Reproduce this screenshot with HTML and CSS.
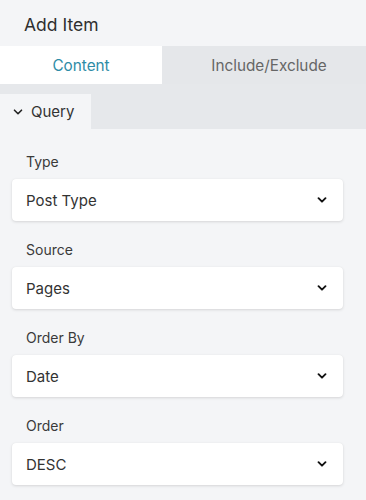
FILE: index.html
```html
<!DOCTYPE html>
<html>
<head>
<meta charset="utf-8">
<link rel="stylesheet" href="styles.css">
</head>
<body>
<div class="panel">
  <div class="title">Add Item</div>
  <div class="tabs">
    <div class="tab active">Content</div>
    <div class="tab">Include/Exclude</div>
  </div>
  <div class="section-bar">
    <div class="section-tab">
      <svg class="caret" width="10" height="10" viewBox="0 0 10 10"><path d="M1.5 3.2 L5 6.7 L8.5 3.2" fill="none" stroke="#222" stroke-width="1.6" stroke-linecap="round" stroke-linejoin="round"/></svg>
      <span>Query</span>
    </div>
  </div>
  <div class="fields">
    <div class="field">
      <div class="label">Type</div>
      <div class="select"><span>Post Type</span><svg class="chev" width="12" height="12" viewBox="0 0 12 12"><path d="M2.5 4.2 L6 7.7 L9.5 4.2" fill="none" stroke="#111" stroke-width="1.9" stroke-linecap="round" stroke-linejoin="round"/></svg></div>
    </div>
    <div class="field">
      <div class="label">Source</div>
      <div class="select"><span>Pages</span><svg class="chev" width="12" height="12" viewBox="0 0 12 12"><path d="M2.5 4.2 L6 7.7 L9.5 4.2" fill="none" stroke="#111" stroke-width="1.9" stroke-linecap="round" stroke-linejoin="round"/></svg></div>
    </div>
    <div class="field">
      <div class="label">Order By</div>
      <div class="select"><span>Date</span><svg class="chev" width="12" height="12" viewBox="0 0 12 12"><path d="M2.5 4.2 L6 7.7 L9.5 4.2" fill="none" stroke="#111" stroke-width="1.9" stroke-linecap="round" stroke-linejoin="round"/></svg></div>
    </div>
    <div class="field">
      <div class="label">Order</div>
      <div class="select"><span>DESC</span><svg class="chev" width="12" height="12" viewBox="0 0 12 12"><path d="M2.5 4.2 L6 7.7 L9.5 4.2" fill="none" stroke="#111" stroke-width="1.9" stroke-linecap="round" stroke-linejoin="round"/></svg></div>
    </div>
  </div>
</div>
</body>
</html>
```

FILE: styles.css
```css
html, body {
  margin: 0;
  padding: 0;
  background: #f4f5f7;
}
body {
  font-family: Inter, "Liberation Sans", Arial, sans-serif;
  color: #333;
}
.panel {
  width: 366px;
  height: 500px;
  overflow: hidden;
  background: #f4f5f7;
}
.title {
  height: 46px;
  box-sizing: border-box;
  padding: 14px 0 0 24px;
  font-size: 17.5px;
  color: #2f2f2f;
  line-height: 22px;
}
.tabs {
  display: flex;
  height: 38px;
}
.tab {
  flex: 0 0 204px;
  box-sizing: border-box;
  padding-left: 10px;
  background: #e5e7ea;
  display: flex;
  align-items: center;
  justify-content: center;
  font-size: 15.3px;
  color: #666;
}
.tab.active {
  flex: 0 0 162px;
  padding-left: 0;
  background: #fff;
  color: #2e8ca6;
}
.section-bar {
  height: 45px;
  box-sizing: border-box;
  padding-top: 10px;
  background: #e6e8eb;
  display: flex;
}
.section-tab {
  width: 91px;
  background: #f4f5f7;
  display: flex;
  align-items: center;
  gap: 8px;
  padding-left: 13px;
  box-sizing: border-box;
  font-size: 15px;
  color: #333;
}
.caret {
  display: block;
}
.fields {
  padding: 22px 23px 0 12px;
  display: flex;
  flex-direction: column;
  gap: 18px;
}
.field {
  display: flex;
  flex-direction: column;
}
.label {
  padding-left: 14px;
  padding-top: 2px;
  font-size: 14px;
  line-height: 18px;
  color: #3a3a3a;
  margin-bottom: 8px;
}
.select {
  height: 42px;
  background: #fff;
  border-radius: 4px;
  box-shadow: 0 1px 3px rgba(0,0,0,0.13), 0 0 1px rgba(0,0,0,0.06);
  display: flex;
  align-items: center;
  justify-content: space-between;
  padding: 0 15px 0 14px;
  font-size: 15px;
  color: #333;
}
.chev {
  display: block;
}
```
